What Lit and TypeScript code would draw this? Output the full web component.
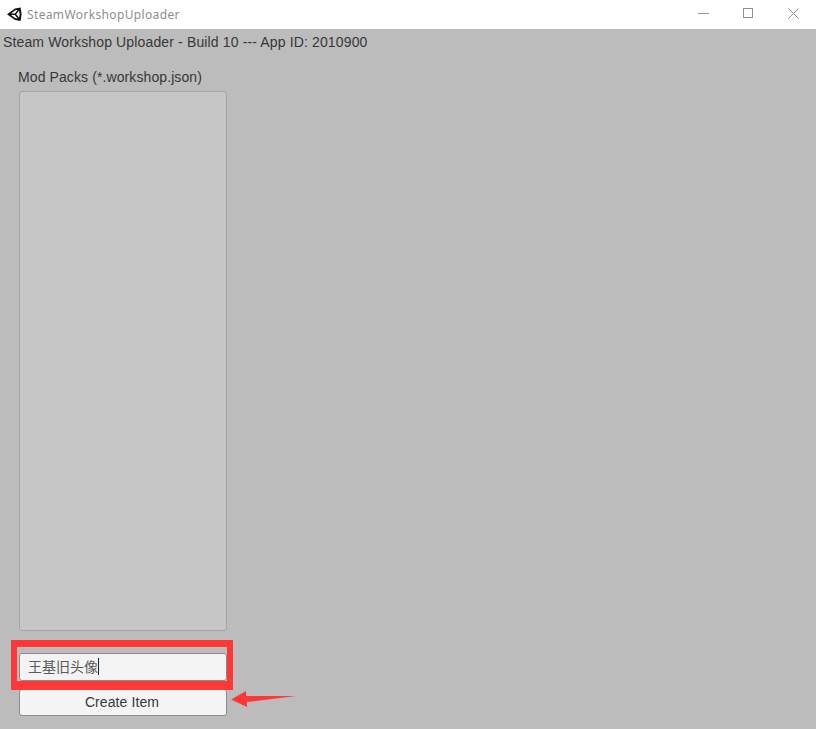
import { LitElement, html, css } from "lit";
import { customElement } from "lit/decorators.js";

@customElement("app-root")
export class AppRoot extends LitElement {
  static styles = css`
    :host { display: block; width: 816px; height: 729px; position: relative; overflow: hidden; background: #bcbcbc; font-family: "Liberation Sans", Arial, sans-serif; }
    .titlebar { height: 29px; background: #fff; display: flex; align-items: center; }
    .logo { width: 16px; height: 16px; margin-left: 6px; margin-right: 5px; margin-top: -2px; flex: none; }
    .title { font-family: "Noto Sans", sans-serif; font-size: 12px; color: #8a8f94; letter-spacing: 0.36px; margin-top: -1px; flex: 1; }
    .win { display: flex; align-items: center; gap: 34px; margin: -2px 17px 0 0; }
    .win svg { display: block; }
    .content { padding: 5px 0 0 3px; color: #383838; letter-spacing: 0.14px; }
    .info { font-size: 14px; line-height: 16px; height: 16px; }
    .panel { margin: 19px 0 0 15px; width: 210px; display: flex; flex-direction: column; align-items: stretch; }
    .label { font-size: 14px; line-height: 16px; height: 16px; letter-spacing: 0.1px; }
    .list { margin: 6px 0 0 1px; width: 206px; height: 538px; background: #c6c6c6; border: 1px solid #a4a4a4; border-radius: 3px; }
    .input { box-sizing: border-box; margin: 22px 0 0 1px; width: 208px; height: 28px; background: #f3f3f3; border: 1px solid #8c8c8c; border-radius: 3px; font-family: "Noto Sans CJK SC", sans-serif; font-size: 14px; letter-spacing: 0; color: #5a5a5a; display: flex; align-items: center; padding: 0 0 2px 8px; }
    .typed { line-height: 17px; }
    .caret { width: 1px; height: 17px; background: #222; }
    .button { box-sizing: border-box; margin: 8px 0 0 1px; width: 208px; height: 27px; background: #f4f4f4; border: 1px solid #8c8c8c; border-radius: 3px; font-size: 14px; letter-spacing: 0.1px; color: #383838; display: flex; align-items: center; justify-content: center; padding: 0 2px 1px 0; }
    .highlight { position: absolute; left: 11px; top: 640px; width: 222px; height: 50px; box-sizing: border-box; border-style: solid; border-color: #fd3838; border-width: 7px 6px 9px 6px; }
    .arrow { position: absolute; left: 230px; top: 689px; }
  `;

  render() {
    return html`
      <div class="titlebar">
        <svg class="logo" viewBox="0 0 16 16" aria-hidden="true">
          <path d="M1 8.2 9 2.4 14.6 1.4 15.6 8.2 14.6 15 9 14Z" fill="#111"/>
          <path d="M5 7.4 9.4 4.2 11.6 3.9 8.9 7.4Z M10.2 8.2 13 4.6 13.7 8.2 13 11.8Z M5 9 8.9 9 11.6 12.5 9.4 12.2Z" fill="#fff"/>
        </svg>
        <div class="title">SteamWorkshopUploader</div>
        <div class="win">
          <svg width="11" height="11" viewBox="0 0 11 11"><path d="M0 5.5H11" stroke="#999" stroke-width="1"/></svg>
          <svg width="11" height="11" viewBox="0 0 11 11"><rect x="0.5" y="0.5" width="9" height="9" fill="none" stroke="#8f8f8f"/></svg>
          <svg width="11" height="11" viewBox="0 0 11 11"><path d="M0.5 0.5 10.5 10.5M10.5 0.5 0.5 10.5" stroke="#8f8f8f" stroke-width="1"/></svg>
        </div>
      </div>
      <div class="content">
        <div class="info">Steam Workshop Uploader - Build 10 --- App ID: 2010900</div>
        <div class="panel">
          <div class="label">Mod Packs (*.workshop.json)</div>
          <div class="list"></div>
          <div class="input"><span class="typed">王基旧头像</span><span class="caret"></span></div>
          <div class="button">Create Item</div>
        </div>
      </div>
      <div class="highlight"></div>
      <svg class="arrow" width="68" height="20" viewBox="0 0 68 20" aria-hidden="true">
        <path d="M1 10.5 16 2 16 7 66 7 17 13 17 18Z" fill="#fd3838"/>
      </svg>
    `;
  }
}
